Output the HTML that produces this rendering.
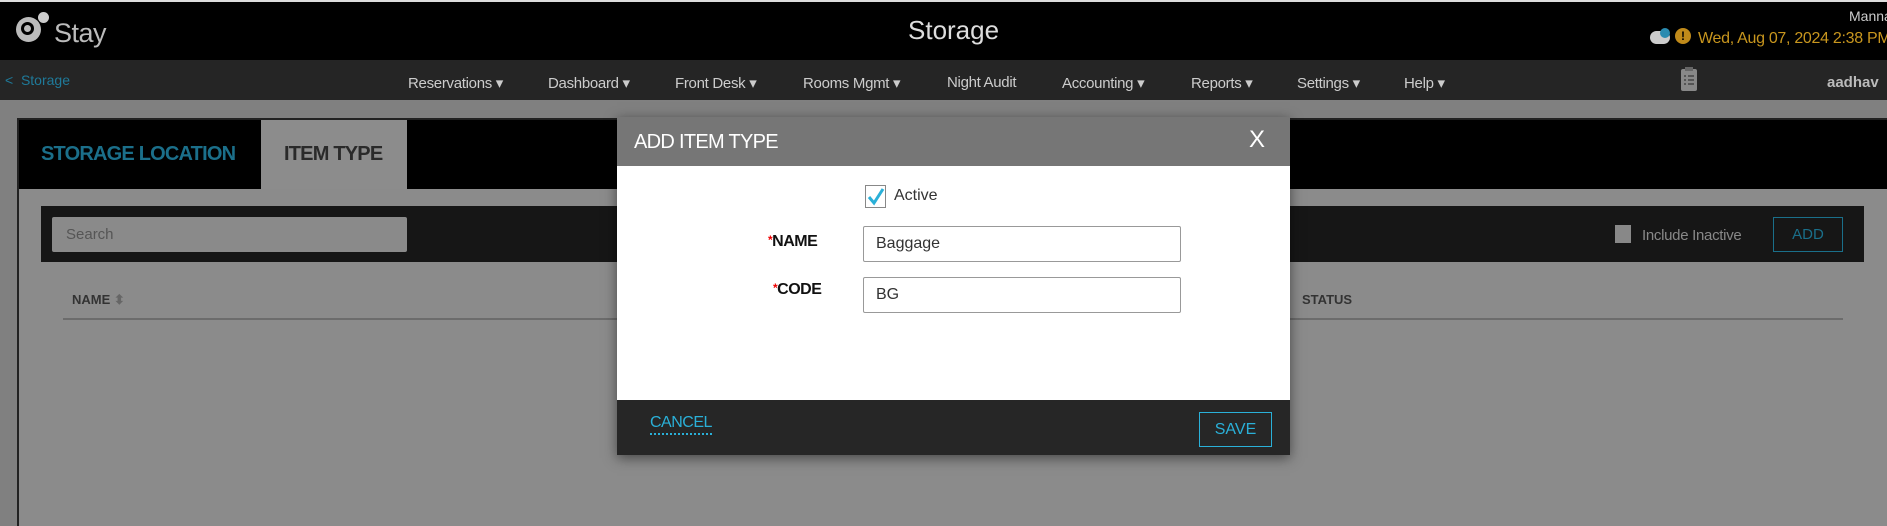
<!DOCTYPE html>
<html><head><style>
*{margin:0;padding:0;box-sizing:border-box}
body{width:1887px;height:526px;overflow:hidden;background:#808080;font-family:"Liberation Sans",sans-serif;position:relative}
.a{position:absolute;white-space:nowrap}
</style></head><body>
<div class="a" style="left:0;top:0;width:1887px;height:60px;background:#000;border-top:2px solid #ddd"></div>
<div class="a" style="left:16px;top:17px;width:25px;height:25px;border-radius:50%;background:#bbb"></div>
<div class="a" style="left:21px;top:22px;width:13px;height:13px;border-radius:50%;border:3px solid #000"></div>
<div class="a" style="left:38px;top:12px;width:11px;height:11px;border-radius:50%;background:#ccc"></div>
<div class="a" style="left:54px;top:18px;font-size:27px;color:#bbb;letter-spacing:-0.5px">Stay</div>
<div class="a" style="left:908px;top:15px;font-size:26px;color:#ddd">Storage</div>
<div class="a" style="left:1849px;top:8px;font-size:14px;color:#ccc">Mannar</div>
<div class="a" style="left:1650px;top:31px;width:20px;height:13px;border-radius:7px;background:#ccc"></div>
<div class="a" style="left:1660px;top:28px;width:10px;height:10px;border-radius:50%;background:#2a8bb0"></div>
<div class="a" style="left:1675px;top:28px;width:16px;height:16px;border-radius:50%;background:#c08a1a;color:#000;font-size:12px;font-weight:bold;text-align:center;line-height:16px">!</div>
<div class="a" style="left:1698px;top:30px;font-size:16px;color:#c8961e;letter-spacing:-0.3px">Wed, Aug 07, 2024 2:38 PM</div>
<div class="a" style="left:0;top:60px;width:1887px;height:40px;background:#252525"></div>
<div class="a" style="left:5px;top:72px;font-size:14px;color:#1f7a9a">&lt;&nbsp; Storage</div>
<div class="a" style="top:74px;left:0;font-size:15px;color:#ccc;width:1887px;height:20px;letter-spacing:-0.3px">
<span class="a" style="left:408px">Reservations ▾</span><span class="a" style="left:548px">Dashboard ▾</span><span class="a" style="left:675px">Front Desk ▾</span><span class="a" style="left:803px">Rooms Mgmt ▾</span><span class="a" style="left:947px">Night Audit</span><span class="a" style="left:1062px">Accounting ▾</span><span class="a" style="left:1191px">Reports ▾</span><span class="a" style="left:1297px">Settings ▾</span><span class="a" style="left:1404px">Help ▾</span></div>
<svg class="a" style="left:1680px;top:66px" width="18" height="26" viewBox="0 0 18 26"><rect x="1" y="3" width="16" height="22" rx="2" fill="#888"/><rect x="5" y="1" width="8" height="4" fill="#666"/><path d="M4 10h2M8 10h6M4 14h2M8 14h6M4 18h2M8 18h6" stroke="#444" stroke-width="1.5"/></svg>
<div class="a" style="left:1827px;top:74px;font-size:15px;font-weight:bold;color:#bbb">aadhav</div>
<div class="a" style="left:17px;top:118px;width:1870px;height:408px;background:#8b8b8b;border:2px solid #222;border-right:none;border-bottom:none"></div>
<div class="a" style="left:19px;top:120px;width:1868px;height:69px;background:#000"></div>
<div class="a" style="left:41px;top:143px;font-size:20px;font-weight:bold;color:#1b6f8a;letter-spacing:-0.8px">STORAGE LOCATION</div>
<div class="a" style="left:261px;top:120px;width:146px;height:69px;background:#8c8c8c"></div>
<div class="a" style="left:284px;top:143px;font-size:20px;font-weight:bold;color:#2a2a2a;letter-spacing:-0.8px">ITEM TYPE</div>
<div class="a" style="left:41px;top:206px;width:1823px;height:56px;background:#161616"></div>
<div class="a" style="left:52px;top:217px;width:355px;height:35px;background:#8a8a8a;border-radius:2px;font-size:15px;color:#555;padding:9px 14px">Search</div>
<div class="a" style="left:1615px;top:225px;width:16px;height:18px;background:#888"></div>
<div class="a" style="left:1642px;top:227px;font-size:15px;color:#888;letter-spacing:-0.3px">Include Inactive</div>
<div class="a" style="left:1773px;top:217px;width:70px;height:35px;border:1px solid #1a6f8a;font-size:15px;color:#1a6f8a;text-align:center;line-height:33px">ADD</div>
<div class="a" style="left:72px;top:292px;font-size:13px;font-weight:bold;color:#333">NAME <span style="color:#666">⬍</span></div>
<div class="a" style="left:1302px;top:292px;font-size:13px;font-weight:bold;color:#333">STATUS</div>
<div class="a" style="left:63px;top:318px;width:1780px;height:2px;background:#6c6c6c"></div>
<div class="a" style="left:617px;top:117px;width:673px;height:338px;box-shadow:0 3px 12px rgba(0,0,0,.5);background:#fff"></div>
<div class="a" style="left:617px;top:117px;width:673px;height:49px;background:#767676"></div>
<div class="a" style="left:634px;top:131px;font-size:20px;color:#fff;letter-spacing:-0.7px">ADD ITEM TYPE</div>
<div class="a" style="left:1249px;top:126px;font-size:24px;color:#fff">X</div>
<div class="a" style="left:865px;top:185px;width:21px;height:23px;border:1px solid #888"></div>
<svg class="a" style="left:866px;top:186px" width="20" height="21"><path d="M3 11l5 6 9-14" stroke="#2ab0d8" stroke-width="3" fill="none"/></svg>
<div class="a" style="left:894px;top:187px;font-size:16px;color:#333">Active</div>
<div class="a" style="left:768px;top:233px;font-size:16px;font-weight:bold;color:#111;letter-spacing:-0.5px"><span style="color:#e00;font-size:12px;vertical-align:top">*</span>NAME</div>
<div class="a" style="left:863px;top:226px;width:318px;height:36px;border:1px solid #999;border-radius:2px;font-size:16px;color:#333;padding:8px 12px">Baggage</div>
<div class="a" style="left:773px;top:281px;font-size:16px;font-weight:bold;color:#111;letter-spacing:-0.5px"><span style="color:#e00;font-size:12px;vertical-align:top">*</span>CODE</div>
<div class="a" style="left:863px;top:277px;width:318px;height:36px;border:1px solid #999;border-radius:2px;font-size:16px;color:#333;padding:8px 12px">BG</div>
<div class="a" style="left:617px;top:400px;width:673px;height:55px;background:#262626"></div>
<div class="a" style="left:650px;top:414px;font-size:16px;color:#2ab0d8;border-bottom:2px dotted #2ab0d8;padding-bottom:1px;letter-spacing:-0.5px">CANCEL</div>
<div class="a" style="left:1199px;top:412px;width:73px;height:35px;border:1px solid #2ab0d8;font-size:16px;color:#2ab0d8;text-align:center;line-height:33px">SAVE</div>
</body></html>
